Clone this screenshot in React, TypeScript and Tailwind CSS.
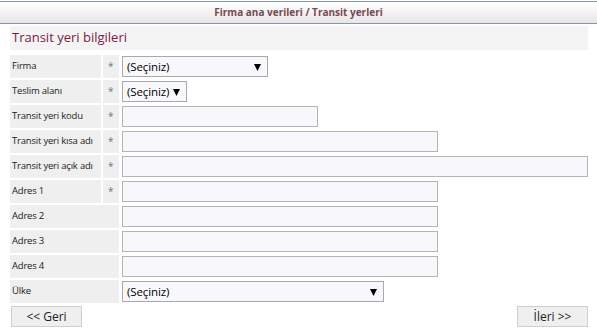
import React from "react";

const font = { fontFamily: '"Open Sans", "Liberation Sans", sans-serif' };

function Sel({ w }: { w: string }) {
  return (
    <div
      className={`${w} h-[21px] flex items-center justify-between border border-[#a9a9a9] bg-[#f8f8fc] pl-[4px] pr-[6px] text-[11.5px] text-black whitespace-nowrap`}
    >
      <span className="tracking-[-0.1px]">(Seçiniz)</span>
      <svg width="7" height="8" viewBox="0 0 7 8" className="shrink-0">
        <path d="M0 1 L7 1 L3.5 8 Z" fill="#000" />
      </svg>
    </div>
  );
}

function Inp({ w }: { w: string }) {
  return <div className={`${w} h-[21px] border border-[#b4b4b4] bg-[#f8f8fc]`} />;
}

function Row({ label, star, children }: { label: string; star?: boolean; children: React.ReactNode }) {
  const lab = "h-full bg-[#efefef] flex items-center pl-[2px] text-[9.5px] tracking-[-0.2px] text-[#222] whitespace-nowrap overflow-hidden";
  return (
    <div className="flex h-[23px] items-center">
      {star ? (
        <>
          <div className={`w-[91px] ${lab}`}>{label}</div>
          <div className="w-[16px] h-full ml-[2px] bg-[#efefef] flex items-center pl-[5px] text-[10px] text-[#777]">*</div>
        </>
      ) : (
        <div className={`w-[109px] ${lab}`}>{label}</div>
      )}
      <div className="ml-[3px] flex items-center">{children}</div>
    </div>
  );
}

export default function App() {
  return (
    <div className="w-[597px] h-[333px] bg-white overflow-hidden" style={font}>
      <div className="mt-[1px] h-[23px] border-t border-b border-[#8596ad] bg-gradient-to-b from-white to-[#e6e6e6] flex items-center justify-center">
        <span className="text-[10px] font-bold text-[#7a4852]">Firma ana verileri / Transit yerleri</span>
      </div>
      <div className="pl-[10px] pr-[9px] mt-[2px]">
        <div className="h-[24px] bg-[#f4f4f4] flex items-center pl-[2px] text-[13px] text-[#7b1a46]">
          Transit yeri bilgileri
        </div>
        <div className="mt-[5px] flex flex-col gap-[2px]">
          <Row label="Firma" star><Sel w="w-[146px]" /></Row>
          <Row label="Teslim alanı" star><Sel w="w-[65px]" /></Row>
          <Row label="Transit yeri kodu" star><Inp w="w-[196px]" /></Row>
          <Row label="Transit yeri kısa adı" star><Inp w="w-[316px]" /></Row>
          <Row label="Transit yeri açık adı" star><Inp w="w-[466px]" /></Row>
          <Row label="Adres 1" star><Inp w="w-[316px]" /></Row>
          <Row label="Adres 2"><Inp w="w-[316px]" /></Row>
          <Row label="Adres 3"><Inp w="w-[316px]" /></Row>
          <Row label="Adres 4"><Inp w="w-[316px]" /></Row>
          <Row label="Ülke"><Sel w="w-[262px]" /></Row>
        </div>
        <div className="mt-[3px] flex justify-between pl-[1px]">
          <button className="w-[71px] h-[21px] border border-[#cfcfcf] bg-[#efefef] text-[12px] text-[#222] flex items-center justify-center">
            &lt;&lt; Geri
          </button>
          <button className="w-[71px] h-[21px] border border-[#cfcfcf] bg-[#efefef] text-[12px] text-[#222] flex items-center justify-center">
            İleri &gt;&gt;
          </button>
        </div>
      </div>
    </div>
  );
}
